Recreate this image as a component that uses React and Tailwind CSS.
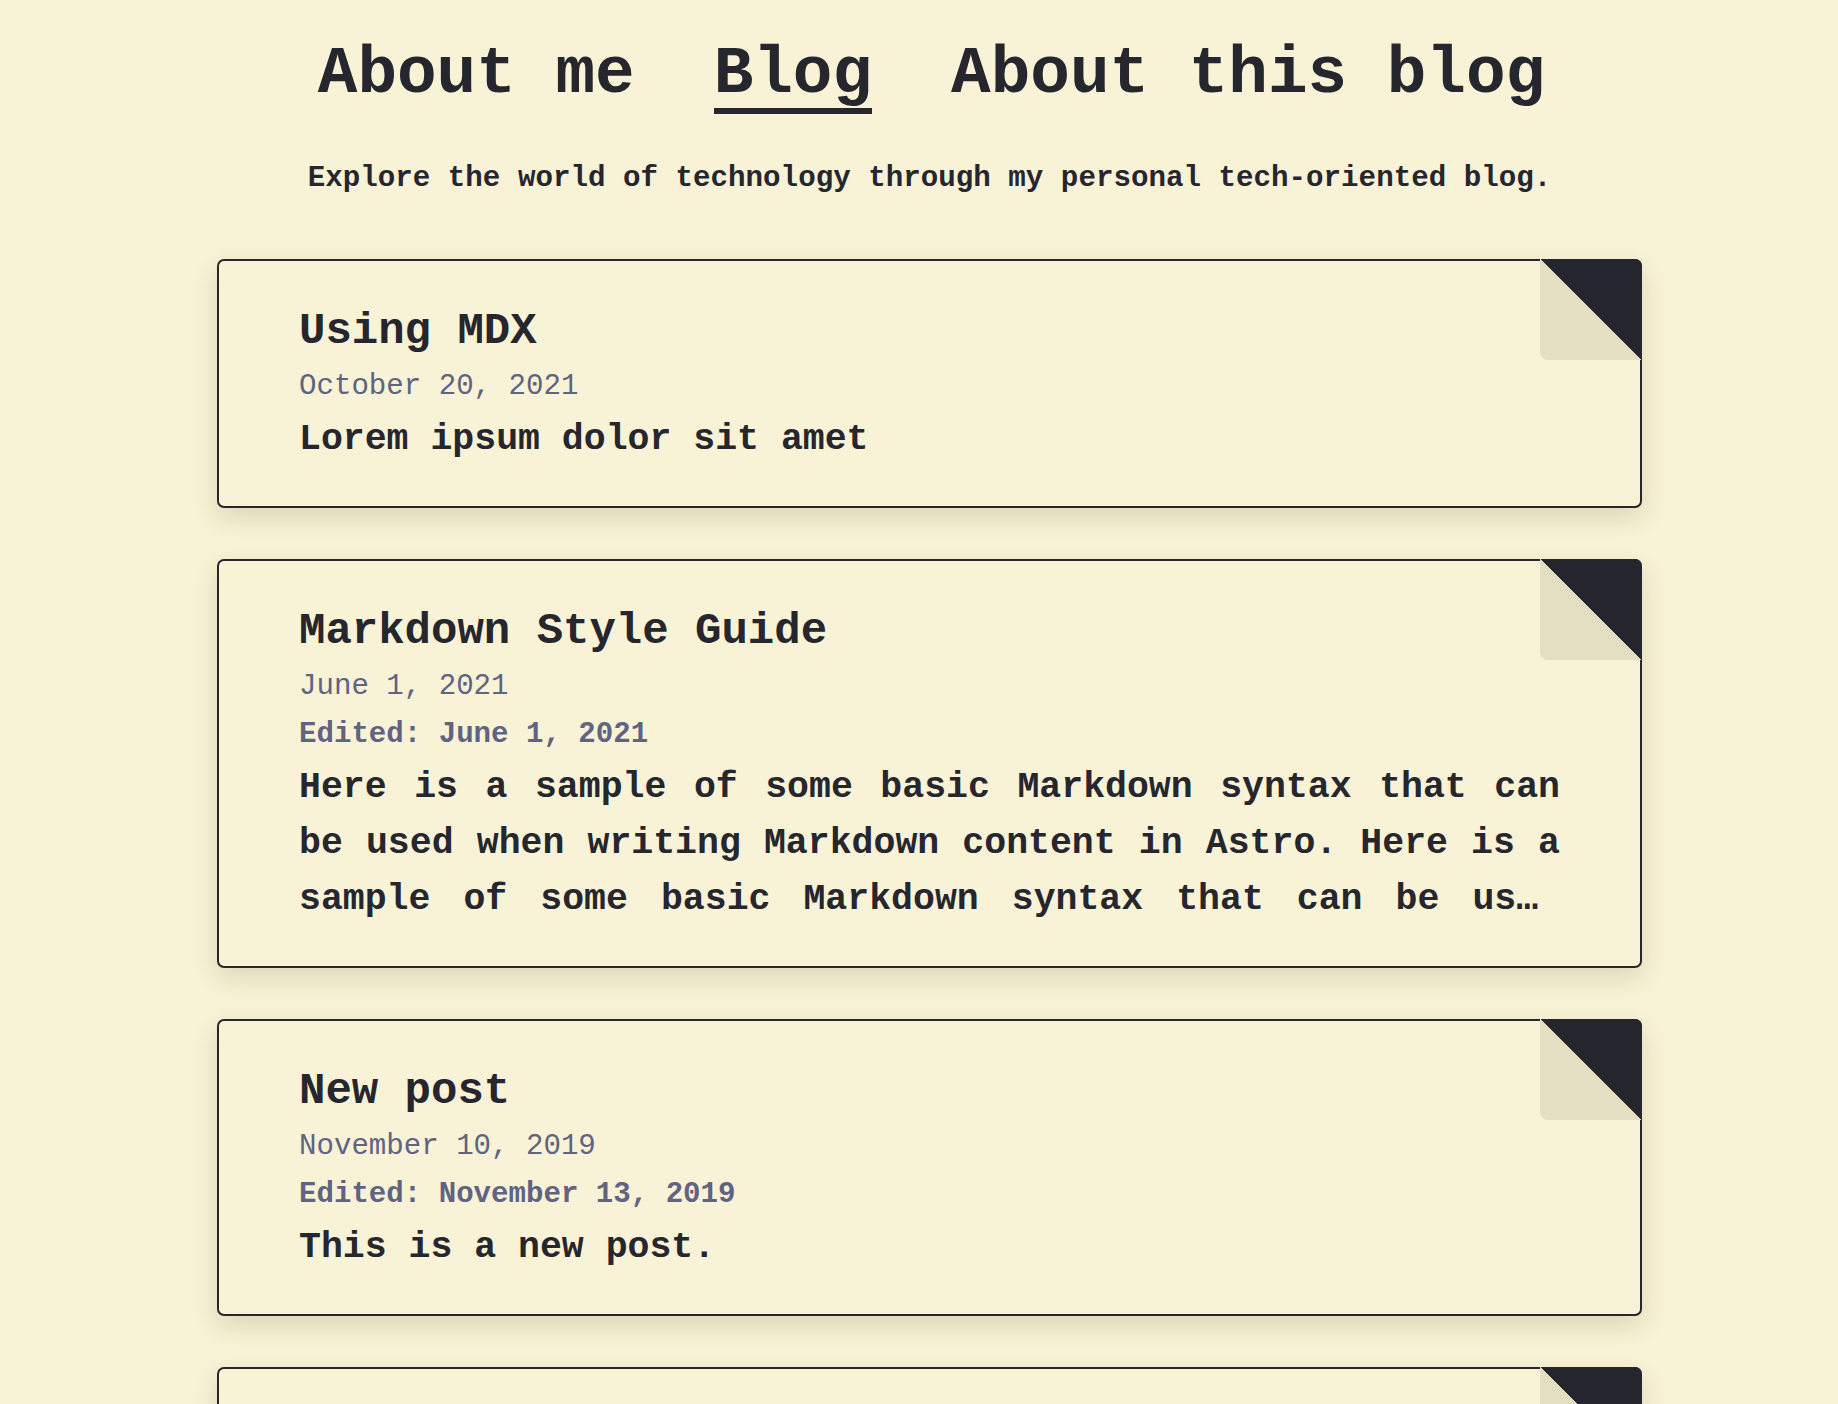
import React from 'react';

const POSTS = [
  {
    title: 'Using MDX',
    date: 'October 20, 2021',
    text: 'Lorem ipsum dolor sit amet',
  },
  {
    title: 'Markdown Style Guide',
    date: 'June 1, 2021',
    edited: 'June 1, 2021',
    text: 'Here is a sample of some basic Markdown syntax that can be used when writing Markdown content in Astro. Here is a sample of some basic Markdown syntax that can be used when writing Markdown content in Astro.',
  },
  {
    title: 'New post',
    date: 'November 10, 2019',
    edited: 'November 13, 2019',
    text: 'This is a new post.',
  },
  {
    title: 'First post',
    date: 'November 1, 2019',
    text: 'This is the very first post.',
  },
];

function PostCard({ post }) {
  return (
    <article className="relative rounded-[7px] border-2 border-[#26262e] bg-[#f8f2d6] pt-[43px] pb-[38px] px-[80px] shadow-[0_10px_24px_rgba(90,80,30,0.16)]">
      {/* folded corner */}
      <div className="absolute -top-[2px] -right-[2px] w-[102px] h-[101px] rounded-tr-[7px] rounded-bl-[8px] bg-[linear-gradient(to_bottom_left,#26262e_50%,#e4dfc3_50%)]" />
      <h2 className="text-[44px] leading-[54px] font-bold">{post.title}</h2>
      <p className="mt-[5px] text-[29.1px] leading-[48px] text-[#606382]">{post.date}</p>
      {post.edited && (
        <p className="text-[29.1px] leading-[48px] font-bold text-[#606382]">Edited: {post.edited}</p>
      )}
      <p className="mt-[1px] text-[36.5px] leading-[56px] font-bold text-justify line-clamp-3">{post.text}</p>
    </article>
  );
}

export default function App() {
  return (
    <div className="min-h-screen bg-[#f8f2d6] text-[#26262e] font-['Liberation_Mono',monospace] pl-[21px] pb-16">
      <div className="mx-auto w-[1425px]">
        {/* Nav */}
        <header className="pt-[42px] flex flex-col items-center">
          <nav className="ml-[4px] flex items-start gap-[79px] text-[66px] leading-[66px] font-bold">
            <a href="#" className="block">About me</a>
            <a href="#" className="block border-b-[6px] border-[#26262e]">Blog</a>
            <a href="#" className="block">About this blog</a>
          </nav>
          <p className="mt-[45px] text-[29.2px] leading-[40px] font-bold">
            Explore the world of technology through my personal tech-oriented blog.
          </p>
        </header>

        {/* Posts */}
        <main className="mt-[60px] flex flex-col gap-[51px]">
          {POSTS.map((post) => (
            <PostCard key={post.title} post={post} />
          ))}
        </main>
      </div>
    </div>
  );
}
